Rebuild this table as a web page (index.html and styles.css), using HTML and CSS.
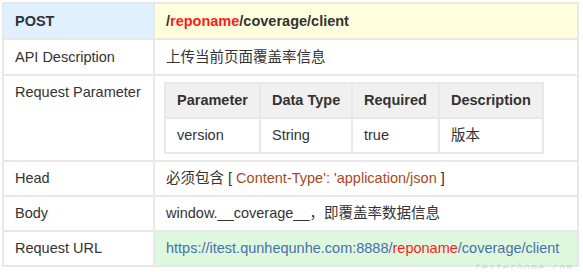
FILE: index.html
```html
<!DOCTYPE html>
<html>
<head>
<meta charset="utf-8">
<link rel="stylesheet" href="styles.css">
</head>
<body>
<div class="wrap">
<table class="api">
  <tr>
    <td class="key method">POST</td>
    <td class="path"><b>/<span class="red">reponame</span>/coverage/client</b></td>
  </tr>
  <tr class="desc">
    <td class="key">API Description</td>
    <td>上传当前页面覆盖率信息</td>
  </tr>
  <tr>
    <td class="key top">Request Parameter</td>
    <td class="param-cell">
      <table class="params">
        <colgroup>
          <col class="c1"><col class="c2"><col class="c3"><col class="c4">
        </colgroup>
        <tr>
          <th>Parameter</th><th>Data Type</th><th>Required</th><th>Description</th>
        </tr>
        <tr>
          <td>version</td><td>String</td><td>true</td><td>版本</td>
        </tr>
      </table>
    </td>
  </tr>
  <tr>
    <td class="key">Head</td>
    <td>必须包含 [ <span class="code">Content-Type': 'application/json</span> ]</td>
  </tr>
  <tr>
    <td class="key">Body</td>
    <td>window.__coverage__，即覆盖率数据信息</td>
  </tr>
  <tr>
    <td class="key">Request URL</td>
    <td class="url">https://itest.qunhequnhe.com:8888/<span class="red">reponame</span>/coverage/client</td>
  </tr>
</table>
<span class="watermark">testerhome.com</span>
</div>
</body>
</html>
```
FILE: styles.css
```css
html, body {
  margin: 0;
  padding: 0;
  background: #fff;
}
body {
  padding: 2px;
  font-family: "Liberation Sans", Arial, "Noto Sans CJK SC", sans-serif;
  font-size: 14.5px;
  color: #333;
}
.wrap {
  position: relative;
  width: 577px;
}
table {
  border-collapse: collapse;
}
.api {
  width: 577px;
  border: 2px solid #e8e8e8;
}
.api > tbody > tr > td {
  border: 2px solid #e8e8e8;
  padding: 6px 10px 7px 11px;
  line-height: 20px;
  vertical-align: middle;
}
.api > tbody > tr > td.key {
  width: 128px;
}
.api > tbody > tr.desc > td {
  padding-top: 7px;
}
.api > tbody > tr > td.top {
  vertical-align: top;
  padding-top: 6px;
}
.api td.method {
  background: #e0f0ff;
  font-weight: bold;
  padding-top: 7px;
}
.api td.path {
  background: #ffffdd;
  padding-top: 7px;
}
.red {
  color: #ff1a1a;
}
.code {
  color: #a8491d;
}
.api td.url {
  background: #ddf8dd;
  color: #4a6fb0;
}
.api > tbody > tr > td.param-cell {
  padding: 6px 10px 6px 9px;
}
.params {
  border: 2px solid #e8e8e8;
  table-layout: fixed;
  width: 378px;
}
.params .c1 { width: 95px; }
.params .c2 { width: 92px; }
.params .c3 { width: 87px; }
.params .c4 { width: 104px; }
.params th, .params td {
  border: 2px solid #e8e8e8;
  padding: 6px 10px 7px 11px;
  text-align: left;
  line-height: 20px;
  white-space: nowrap;
}
.params th {
  background: #f0f0f0;
  font-weight: bold;
}
.watermark {
  position: absolute;
  right: 6px;
  bottom: -6px;
  font-family: "DejaVu Sans Mono", monospace;
  font-style: italic;
  font-size: 10px;
  letter-spacing: 1px;
  color: rgba(150,150,150,0.35);
}
```
